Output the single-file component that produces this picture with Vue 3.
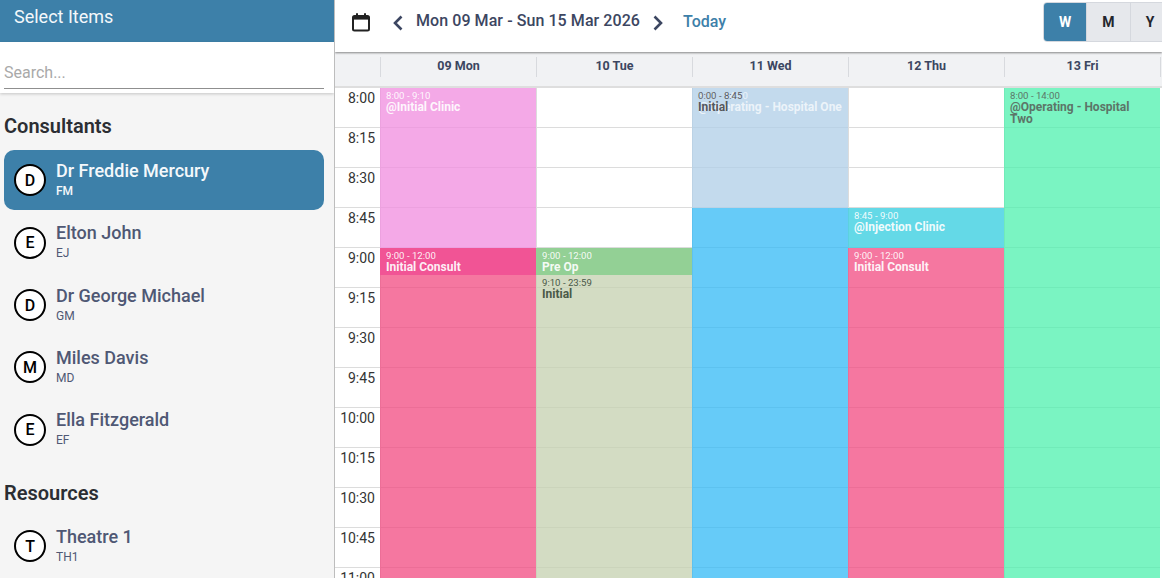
<script setup>
const consultants = [
  { letter: 'D', name: 'Dr Freddie Mercury', code: 'FM', active: true },
  { letter: 'E', name: 'Elton John', code: 'EJ' },
  { letter: 'D', name: 'Dr George Michael', code: 'GM' },
  { letter: 'M', name: 'Miles Davis', code: 'MD' },
  { letter: 'E', name: 'Ella Fitzgerald', code: 'EF' },
]
const resources = [{ letter: 'T', name: 'Theatre 1', code: 'TH1' }]

const times = ['8:00', '8:15', '8:30', '8:45', '9:00', '9:15', '9:30', '9:45', '10:00', '10:15', '10:30', '10:45', '11:00']

const days = [
  {
    label: '09 Mon',
    events: [
      { top: 0, height: 160, kind: 'orchid', time: '8:00 - 9:10', title: '@Initial Clinic' },
      { top: 160, height: 27, kind: 'hot', time: '9:00 - 12:00', title: 'Initial Consult' },
      { top: 187, height: 340, kind: 'rose' },
    ],
  },
  {
    label: '10 Tue',
    events: [
      { top: 160, height: 27, kind: 'green', time: '9:00 - 12:00', title: 'Pre Op' },
      { top: 187, height: 340, kind: 'sage dark', time: '9:10 - 23:59', title: 'Initial' },
    ],
  },
  {
    label: '11 Wed',
    events: [
      { top: 0, height: 120, kind: 'pale faint', time: '8:00 - 14:00', title: '@Operating - Hospital One' },
      { top: 0, height: 120, kind: 'clear dark', time: '0:00 - 8:45', title: 'Initial' },
      { top: 120, height: 400, kind: 'sky' },
    ],
  },
  {
    label: '12 Thu',
    events: [
      { top: 120, height: 40, kind: 'teal', time: '8:45 - 9:00', title: '@Injection Clinic' },
      { top: 160, height: 367, kind: 'rose', time: '9:00 - 12:00', title: 'Initial Consult' },
    ],
  },
  {
    label: '13 Fri',
    events: [
      { top: 0, height: 527, kind: 'mint dark', time: '8:00 - 14:00', title: '@Operating - Hospital Two' },
    ],
  },
]
</script>

<template>
  <div class="page">
    <aside class="sidebar">
      <div class="side-title">Select Items</div>
      <div class="search-box">
        <input class="search" type="text" placeholder="Search..." />
      </div>

      <h2 class="group-title first">Consultants</h2>
      <div class="group">
        <div v-for="item in consultants" :key="item.code" class="person" :class="{ active: item.active }">
          <span class="avatar">{{ item.letter }}</span>
          <div class="person-text">
            <div class="person-name">{{ item.name }}</div>
            <div class="person-code">{{ item.code }}</div>
          </div>
        </div>
      </div>

      <h2 class="group-title">Resources</h2>
      <div class="group">
        <div v-for="item in resources" :key="item.code" class="person">
          <span class="avatar">{{ item.letter }}</span>
          <div class="person-text">
            <div class="person-name">{{ item.name }}</div>
            <div class="person-code">{{ item.code }}</div>
          </div>
        </div>
      </div>
    </aside>

    <main class="main">
      <header class="toolbar">
        <svg class="cal-icon" width="20" height="20" viewBox="0 0 20 20" fill="none">
          <rect x="2" y="4" width="16" height="14.5" rx="1.5" stroke="#222" stroke-width="2" />
          <rect x="2" y="4" width="16" height="3.6" fill="#222" />
          <path d="M6 1.2v3M14 1.2v3" stroke="#222" stroke-width="2" />
        </svg>
        <svg class="chev" width="12" height="18" viewBox="0 0 12 18" fill="none">
          <path d="M9.5 2.5 3 9l6.5 6.5" stroke="#3c4661" stroke-width="2.6" />
        </svg>
        <span class="range">Mon 09 Mar - Sun 15 Mar 2026</span>
        <svg class="chev" width="12" height="18" viewBox="0 0 12 18" fill="none">
          <path d="M2.5 2.5 9 9l-6.5 6.5" stroke="#3c4661" stroke-width="2.6" />
        </svg>
        <a class="today">Today</a>
        <div class="views">
          <button class="view on">W</button>
          <button class="view">M</button>
          <button class="view last">Y</button>
        </div>
      </header>

      <div class="day-head">
        <div class="head-gap"></div>
        <div v-for="day in days" :key="day.label" class="head-cell">{{ day.label }}</div>
      </div>

      <div class="grid">
        <div class="times">
          <div v-for="t in times" :key="t" class="time">{{ t }}</div>
        </div>
        <div v-for="day in days" :key="day.label" class="day">
          <div v-for="t in times" :key="t" class="slot"></div>
          <div
            v-for="(ev, i) in day.events"
            :key="i"
            class="event"
            :class="ev.kind"
            :style="{ top: ev.top + 'px', height: ev.height + 'px' }"
          >
            <div v-if="ev.time" class="ev-time">{{ ev.time }}</div>
            <div v-if="ev.title" class="ev-title">{{ ev.title }}</div>
          </div>
        </div>
      </div>
    </main>
  </div>
</template>

<style>
html, body { margin: 0; overflow: hidden; }
</style>

<style scoped>
.page {
  display: flex;
  width: 1162px;
  height: 578px;
  overflow: hidden;
  font-family: Roboto, 'Liberation Sans', sans-serif;
  background: #fff;
}

.sidebar {
  width: 334px;
  flex: none;
  height: 578px;
  overflow: hidden;
  background: #f5f5f5;
  border-right: 1px solid #bdbdbd;
}
.side-title {
  height: 42px;
  box-sizing: border-box;
  padding: 6px 14px 0;
  background: #3d80a9;
  color: #f4f8fb;
  font-size: 18px;
  line-height: 22px;
}
.search-box {
  height: 51px;
  box-sizing: border-box;
  padding: 17px 10px 0 4px;
  background: #fff;
  box-shadow: 0 1px 3px rgba(0, 0, 0, 0.2);
}
.search {
  display: block;
  width: 100%;
  height: 30px;
  box-sizing: border-box;
  padding: 0 0 2px;
  border: 0;
  border-bottom: 1px solid #8f8f8f;
  outline: 0;
  background: transparent;
  font-family: inherit;
  font-size: 16px;
  color: #333;
}
.search::placeholder { color: #a9a9a9; opacity: 1; }

.group-title {
  margin: 21px 0 11.5px;
  padding: 0 4px;
  font-size: 20px;
  line-height: 24px;
  height: 24px;
  font-weight: 600;
  color: #2b2e33;
}
.group-title.first { margin-top: 21px; margin-bottom: 12.45px; }

.group { padding: 0 10px 0 4px; }
.person {
  display: flex;
  align-items: center;
  gap: 10px;
  height: 60px;
  box-sizing: border-box;
  padding-left: 10px;
  margin-bottom: 2.35px;
  border-radius: 10px;
  color: #4f5874;
}
.person.active {
  background: #3d80a9;
  color: #f4f8fb;
}
.avatar {
  width: 32px;
  height: 32px;
  box-sizing: border-box;
  border: 2px solid #000;
  border-radius: 50%;
  background: #fff;
  color: #000;
  display: flex;
  align-items: center;
  justify-content: center;
  font-size: 16px;
  font-weight: 500;
  flex: none;
}
.person-text { padding-bottom: 2px; }
.person-name {
  font-size: 18px;
  line-height: 22px;
  font-weight: 500;
}
.person-code {
  font-size: 12px;
  line-height: 16px;
  margin-top: 1px;
}
.person.active .person-code { font-weight: 500; }

.main {
  flex: 1;
  min-width: 0;
  display: flex;
  flex-direction: column;
  overflow: hidden;
}
.toolbar {
  height: 52px;
  flex: none;
  display: flex;
  align-items: center;
  box-sizing: border-box;
  padding: 0 0 8px 16px;
  background: #fff;
  position: relative;
  z-index: 2;
  box-shadow: 0 1px 2px rgba(0, 0, 0, 0.45);
}
.cal-icon { margin-right: 21px; }
.chev { margin-top: 1px; }
.range {
  margin: -2px 12px 0 12px;
  font-size: 16px;
  line-height: 20px;
  letter-spacing: 0.07px;
  font-weight: 500;
  color: #3c4661;
}
.today {
  margin-left: 19px;
  margin-top: -2px;
  font-size: 16px;
  font-weight: 500;
  color: #3d80a9;
}
.views {
  display: flex;
  margin-left: auto;
  margin-right: -8px;
  align-self: flex-start;
  margin-top: 2px;
  border: 1px solid #d5d8de;
  border-radius: 4px;
  overflow: hidden;
}
.view {
  width: 44px;
  height: 38px;
  padding: 0;
  border: 0;
  border-left: 1px solid #d5d8de;
  background: #e6e8ec;
  font-family: inherit;
  font-size: 14px;
  font-weight: 700;
  color: #23262d;
}
.view.last { width: 39px; }
.view.on {
  width: 42px;
  border-left: 0;
  background: #3d80a9;
  color: #fff;
}

.day-head {
  height: 36px;
  flex: none;
  display: flex;
  align-items: center;
  box-sizing: border-box;
  background: #f1f2f4;
  border-bottom: 2px solid #dedede;
}
.head-gap { width: 45px; flex: none; }
.head-cell {
  width: 156px;
  flex: none;
  box-sizing: border-box;
  height: 20px;
  margin-top: -4px;
  border-left: 1px solid #d8dade;
  text-align: center;
  font-size: 12.5px;
  line-height: 18px;
  font-weight: 700;
  color: #3c4661;
}
.head-cell:last-child { width: 157px; border-right: 1px solid #d8dade; }

.grid { flex: 1; display: flex; min-height: 0; overflow: hidden; }
.times { width: 45px; flex: none; }
.time {
  height: 40px;
  box-sizing: border-box;
  padding: 2px 5px 0 0;
  border-bottom: 1px solid #dcdcdc;
  text-align: right;
  font-size: 14px;
  line-height: 16px;
  color: #333;
}
.day {
  width: 156px;
  flex: none;
  position: relative;
  box-sizing: border-box;
  border-left: 1px solid #dcdcdc;
}
.slot {
  height: 40px;
  box-sizing: border-box;
  border-bottom: 1px solid #dcdcdc;
}
.event {
  position: absolute;
  left: -1px;
  right: 0;
  box-sizing: border-box;
  padding: 2px 6px 0;
  overflow: hidden;
  color: rgba(255, 255, 255, 0.92);
}
.ev-time { font-size: 9.6px; line-height: 11px; }
.ev-title { font-size: 12px; line-height: 12px; font-weight: 700; }

.orchid { background: rgba(241, 145, 224, 0.78); }
.hot { background: #f15495; }
.rose { background: rgba(241, 74, 128, 0.75); }
.green { background: #93d095; }
.sage { background: rgba(197, 209, 176, 0.76); }
.pale { background: rgba(176, 206, 231, 0.76); }
.sky { background: rgba(51, 185, 246, 0.75); }
.teal { background: rgba(56, 206, 224, 0.78); }
.mint { background: rgba(78, 240, 174, 0.75); }
.clear { background: transparent; }
.faint { color: rgba(255, 255, 255, 0.7); }
.sage.dark { color: #4a5a48; }
.mint.dark { color: #5c7568; }
.clear.dark { color: #55585e; }
</style>
